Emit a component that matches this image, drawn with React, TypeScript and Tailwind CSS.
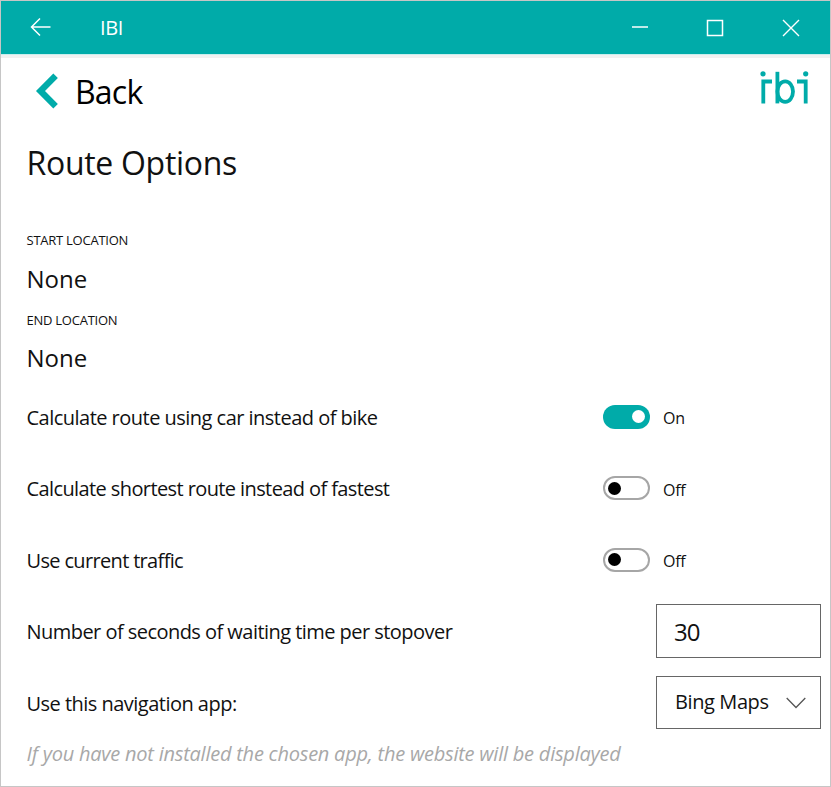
import React from 'react';

function TitleBar() {
  return (
    <header className="flex h-[53px] shrink-0 items-center bg-[#00aba9] text-white">
      <svg className="mb-[1px] ml-[29px] h-5 w-[22px]" viewBox="0 0 22 20" fill="none" stroke="currentColor" strokeWidth="1.5">
        <path d="M20.5 10H1.5M10 1.5L1.5 10L10 18.5" />
      </svg>
      <span className="ml-[48px] pt-[1px] text-[20px] leading-[28px] tracking-[-0.4px]">IBI</span>
      <svg className="mb-[1px] ml-auto h-5 w-[18px]" viewBox="0 0 18 20" stroke="currentColor" strokeWidth="1.5">
        <path d="M1 10H17" />
      </svg>
      <svg className="ml-[57px] h-[18px] w-[18px]" viewBox="0 0 18 18" fill="none" stroke="currentColor" strokeWidth="1.5">
        <path d="M1.5 1.5H16.5V16.5H1.5Z" />
      </svg>
      <svg className="mr-[30px] ml-[58px] h-[18px] w-[18px]" viewBox="0 0 18 18" stroke="currentColor" strokeWidth="1.4">
        <path d="M1 1L17 17M17 1L1 17" />
      </svg>
    </header>
  );
}

function Logo() {
  return (
    <svg className="h-[36px] w-[52px]" viewBox="0 0 52 36" fill="none" stroke="#00aba9" strokeWidth="3.8">
      <circle cx="5" cy="3.8" r="2.6" fill="#00aba9" stroke="none" />
      <path d="M5.3 33.4V11.5H14" />
      <path d="M19.4 1.8V33.4" />
      <ellipse cx="27.2" cy="21.6" rx="7.8" ry="10.2" />
      <circle cx="47.7" cy="3.8" r="2.6" fill="#00aba9" stroke="none" />
      <path d="M39 11.5H47.7V33.4" />
    </svg>
  );
}

function Toggle({ on }: { on: boolean }) {
  return (
    <div className="flex w-[218px] items-center">
      <div
        className={
          on
            ? 'flex h-[24px] w-[47px] items-center justify-end rounded-full bg-[#00aba9] pr-[5px]'
            : 'flex h-[24px] w-[47px] items-center rounded-full border-2 border-[#a6a6a6] pl-[3px]'
        }
      >
        <span className={on ? 'size-[13px] rounded-full bg-white' : 'size-[13px] rounded-full bg-black'} />
      </div>
      <span className="ml-[13px] pt-[3px] text-[16px] leading-[22px] tracking-[-0.3px]">{on ? 'On' : 'Off'}</span>
    </div>
  );
}

function Row({ label, tracking, children }: { label: string; tracking: string; children: React.ReactNode }) {
  return (
    <div className="flex h-[71.5px] items-center justify-between">
      <span className={`pt-[1.5px] text-[20px] leading-[28px] ${tracking}`}>{label}</span>
      {children}
    </div>
  );
}

export default function App() {
  return (
    <div className="flex h-[787px] w-[831px] flex-col border border-[#c6c6c6] bg-white font-['Open_Sans',sans-serif] text-[#111]">
      <TitleBar />
      <div className="h-[4px] shrink-0 border-t border-[#c9eeed] bg-[#f1f1f1]" />
      <div className="flex h-[66px] shrink-0 items-center pr-[20px] pl-[33px] text-black">
        <svg className="h-[36px] w-[24px]" viewBox="0 0 24 36" fill="none" stroke="#00aba9" strokeWidth="6.4">
          <path d="M21.6 2.8L6.5 18L21.6 33.2" />
        </svg>
        <span className="ml-[17px] pt-[2px] text-[32px] leading-[40px] tracking-[-0.8px]">Back</span>
        <div className="mb-[6px] ml-auto">
          <Logo />
        </div>
      </div>
      <main className="flex flex-col pr-[9px] pl-[25.5px]">
        <h1 className="mt-[19px] text-[32px] leading-[40px] tracking-[-0.3px]">Route Options</h1>
        <div className="mt-[47px] text-[13px] leading-[20px] tracking-[-0.25px]">START LOCATION</div>
        <div className="mt-[12px] text-[24px] leading-[34px]">None</div>
        <div className="mt-[14px] text-[13px] leading-[20px] tracking-[-0.25px]">END LOCATION</div>
        <div className="mt-[11px] text-[24px] leading-[34px]">None</div>
        <div className="mt-[6px] flex flex-col">
          <Row label="Calculate route using car instead of bike" tracking="tracking-[-0.52px]">
            <Toggle on />
          </Row>
          <Row label="Calculate shortest route instead of fastest" tracking="tracking-[-0.6px]">
            <Toggle on={false} />
          </Row>
          <Row label="Use current traffic" tracking="tracking-[-0.66px]">
            <Toggle on={false} />
          </Row>
          <Row label="Number of seconds of waiting time per stopover" tracking="tracking-[-0.54px]">
            <div className="flex h-[54px] w-[165px] items-center border border-[#666] pt-[2px] pl-[17px] text-[24px] leading-[34px] tracking-[-0.9px]">
              30
            </div>
          </Row>
          <Row label="Use this navigation app:" tracking="tracking-[-0.52px]">
            <div className="flex h-[53px] w-[165px] items-center justify-between border border-[#666] pr-[14px] pl-[18px] text-[20px] leading-[28px] tracking-[-0.4px]">
              <span className="pb-px">Bing Maps</span>
              <svg className="h-[12px] w-[20px]" viewBox="0 0 20 12" fill="none" stroke="#555" strokeWidth="1.3">
                <path d="M0.7 1L10 10.5L19.3 1" />
              </svg>
            </div>
          </Row>
        </div>
        <p className="mt-px text-[20px] leading-[28px] tracking-[-0.23px] text-[#a8a8a8] italic">
          If you have not installed the chosen app, the website will be displayed
        </p>
      </main>
    </div>
  );
}
